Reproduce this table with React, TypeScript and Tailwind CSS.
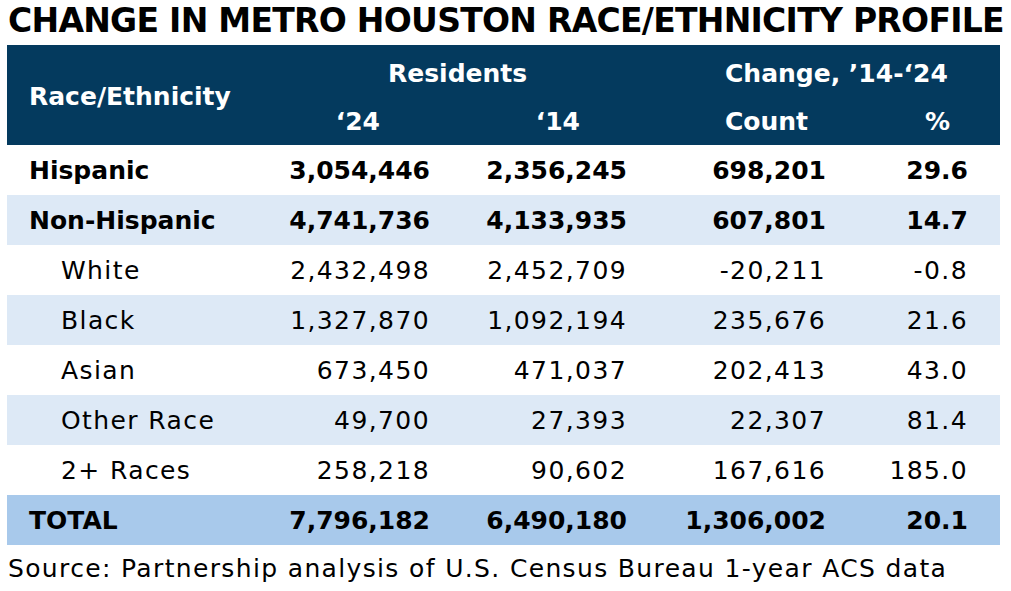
import React from "react";

type Row = {
  label: string;
  values: string[];
  bold?: boolean;
  indent?: boolean;
  bg: string;
};

const rows: Row[] = [
  { label: "Hispanic", values: ["3,054,446", "2,356,245", "698,201", "29.6"], bold: true, bg: "bg-white" },
  { label: "Non-Hispanic", values: ["4,741,736", "4,133,935", "607,801", "14.7"], bold: true, bg: "bg-[#dde9f6]" },
  { label: "White", values: ["2,432,498", "2,452,709", "-20,211", "-0.8"], indent: true, bg: "bg-white" },
  { label: "Black", values: ["1,327,870", "1,092,194", "235,676", "21.6"], indent: true, bg: "bg-[#dde9f6]" },
  { label: "Asian", values: ["673,450", "471,037", "202,413", "43.0"], indent: true, bg: "bg-white" },
  { label: "Other Race", values: ["49,700", "27,393", "22,307", "81.4"], indent: true, bg: "bg-[#dde9f6]" },
  { label: "2+ Races", values: ["258,218", "90,602", "167,616", "185.0"], indent: true, bg: "bg-white" },
  { label: "TOTAL", values: ["7,796,182", "6,490,180", "1,306,002", "20.1"], bold: true, bg: "bg-[#a8c9eb]" },
];

// right padding for each number column so the figures line up with the source
const valuePad = ["pr-[20px]", "pr-[20px]", "pr-[20px]", "pr-[32px]"];

export default function App() {
  return (
    <div className="w-[1011px] h-[591px] bg-white text-black font-['DejaVu_Sans',sans-serif] overflow-hidden">
      {/* Title */}
      <div className="h-[45px] flex items-center pl-[8px] pb-1">
        <h1 className="text-[33px] leading-none font-bold tracking-[-0.72px] whitespace-nowrap">
          CHANGE IN METRO HOUSTON RACE/ETHNICITY PROFILE
        </h1>
      </div>

      <div className="ml-[7px] w-[993px] text-[25px] leading-none">
        {/* Header */}
        <div className="grid grid-cols-[253px_190px_197px_199px_154px] grid-rows-[53px_47px] bg-[#043a5e] text-white font-bold">
          <div className="row-span-2 flex items-center pl-[22px] pt-[2px] whitespace-nowrap">Race/Ethnicity</div>
          <div className="col-span-2 flex items-center pl-[128px] pt-[4px] whitespace-nowrap">Residents</div>
          <div className="col-span-2 flex items-center pl-[78px] pt-[4px] whitespace-nowrap">Change, ’14-‘24</div>
          <div className="flex items-center justify-end pr-[70px]">‘24</div>
          <div className="flex items-center justify-end pr-[67px]">‘14</div>
          <div className="flex items-center justify-end pr-[38px]">Count</div>
          <div className="flex items-center justify-end pr-[50px]">%</div>
        </div>

        {/* Body */}
        {rows.map((row) => (
          <div
            key={row.label}
            className={`grid grid-cols-[253px_190px_197px_199px_154px] h-[50px] ${row.bg} ${
              row.bold ? "font-bold" : "font-normal tracking-[1.4px]"
            }`}
          >
            <div className={`flex items-center whitespace-nowrap ${row.indent ? "pl-[54px]" : "pl-[22px]"}`}>{row.label}</div>
            {row.values.map((v, i) => (
              <div key={i} className={`flex items-center justify-end whitespace-nowrap ${valuePad[i]}`}>
                {v}
              </div>
            ))}
          </div>
        ))}
      </div>

      {/* Source */}
      <div className="h-[46px] flex items-center pl-[8px] text-[25px] leading-none whitespace-nowrap tracking-[1.35px]">
        Source: Partnership analysis of U.S. Census Bureau 1-year ACS data
      </div>
    </div>
  );
}
